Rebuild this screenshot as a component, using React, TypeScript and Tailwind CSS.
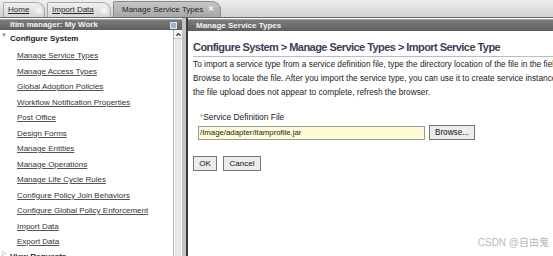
import { ChevronUp } from 'lucide-react'

const NAV_ITEMS = [
  'Manage Service Types',
  'Manage Access Types',
  'Global Adoption Policies',
  'Workflow Notification Properties',
  'Post Office',
  'Design Forms',
  'Manage Entities',
  'Manage Operations',
  'Manage Life Cycle Rules',
  'Configure Policy Join Behaviors',
  'Configure Global Policy Enforcement',
  'Import Data',
  'Export Data',
]

function Tab({ label, width, active }: { label: string, width: string, active?: boolean }) {
  if (active) {
    return (
      <div className={`${width} flex h-[16px] items-center gap-[5px] rounded-tr-[9px] rounded-tl-[2px] border border-b-0 border-[#8a8a8a] bg-gradient-to-b from-[#c6c6c6] to-[#a6a6a6] pl-[8px] text-[8px] text-[#1e1e1e]`}>
        <span>{label}</span>
        <span className="text-[7px] font-bold text-white">✕</span>
      </div>
    )
  }
  return (
    <div className={`${width} flex h-[15px] items-center gap-[6px] rounded-tr-[9px] rounded-tl-[2px] border border-b-0 border-[#a8a8a8] bg-gradient-to-b from-[#f0f0f0] to-[#d6d6d6] pl-[4px] text-[8px] text-[#2a2a2a]`}>
      <span className="underline">{label}</span>
      <span className="h-[7px] w-[7px] rounded-[1px] bg-[#ebebeb] text-center text-[6px] leading-[7px] text-white">✕</span>
    </div>
  )
}

export default function App() {
  return (
    <div className="flex h-[256px] w-[553px] flex-col overflow-hidden bg-white font-['Liberation_Sans',Arial,sans-serif]">
      <div className="flex h-[18px] shrink-0 items-end gap-[2px] border-b border-[#6a6a6a] bg-gradient-to-b from-[#eeeeee] to-[#d2d2d2] pl-[3px]">
        <Tab label="Home" width="w-[42px]" />
        <Tab label="Import Data" width="w-[64px]" />
        <Tab label="Manage Service Types" width="w-[108px]" active />
      </div>

      <div className="flex min-h-0 flex-1">
        <aside className="flex w-[182px] shrink-0 flex-col">
          <div className="mt-[1px] flex h-[11px] items-center justify-between border-t border-[#a4a4a4] bg-gradient-to-b from-[#7c7c7c] to-[#5f5f5f] pl-[10px] pr-[5px]">
            <span className="text-[8px] font-bold text-[#f2f2f2]">Itim manager: My Work</span>
            <span className="h-[7px] w-[7px] border border-[#dde6f0] bg-[#9fb3c8]" />
          </div>
          <div className="flex min-h-0 flex-1">
            <div className="relative flex-1 overflow-hidden pl-[17px] pt-[4px]">
              <span className="absolute left-[1px] top-[1px] text-[6px] text-[#8c8c99]">▼</span>
              <div className="-ml-[7px] mb-[6px] text-[8px] font-bold leading-[10px] text-[#222]">Configure System</div>
              <ul className="flex flex-col">
                {NAV_ITEMS.map((item) => (
                  <li key={item} className="h-[15.5px] text-[8px] leading-[12px] text-[#333] underline decoration-[#555]">
                    {item}
                  </li>
                ))}
              </ul>
              <div className="relative -ml-[7px] text-[8px] font-bold leading-[10px] text-[#222]">
                <span className="absolute -left-[8px] -top-[4px] text-[6px] font-normal text-[#8c8c99]">▷</span>
                View Requests
              </div>
            </div>
            <div className="flex w-[9px] flex-col border-l border-[#b4b4b4] bg-[#e7e7e7]">
              <div className="flex h-[9px] items-center justify-center border-b border-[#c4c4c4] bg-[#f4f4f4]">
                <ChevronUp size={7} strokeWidth={4} className="text-[#222]" />
              </div>
              <div className="flex-1 border-x border-[#f6f6f6]" />
            </div>
          </div>
        </aside>

        <div className="w-[6px] shrink-0 border-r-2 border-[#3c3c3c] bg-[#c4c4c4]" />

        <main className="flex min-w-0 flex-1 flex-col overflow-hidden">
          <div className="mt-[1px] flex h-[12px] items-center border-t border-[#a4a4a4] bg-gradient-to-b from-[#7c7c7c] to-[#5f5f5f] pl-[8px]">
            <span className="text-[8px] font-bold text-[#f2f2f2]">Manage Service Types</span>
          </div>
          <div className="relative flex-1 pl-[5px] pt-[9px]">
            <h1 className="whitespace-nowrap border-b border-[#b8bcc8] pb-[2px] text-[11px] font-bold leading-[14px] tracking-[-0.55px] text-[#3b4058]">
              Configure System &gt; Manage Service Types &gt; Import Service Type
            </h1>
            <p className="whitespace-nowrap text-[8.3px] leading-[14px] text-[#222]">
              To import a service type from a service definition file, type the directory location of the file in the field, or click
              <br />
              Browse to locate the file. After you import the service type, you can use it to create service instances. If
              <br />
              the file upload does not appear to complete, refresh the browser.
            </p>
            <div className="mt-[12px] pl-[5px]">
              <div className="pl-[2px] text-[8.4px] leading-[12px] text-[#222]">
                <span className="text-[#c89a2a]">*</span>Service Definition File
              </div>
              <div className="mt-[2px] flex items-center gap-[4px]">
                <div className="flex h-[14px] w-[227px] items-center border border-[#9a9a9a] bg-[#fffbd6] pl-[1px] text-[7.8px] text-[#222]">
                  /Image/adapter/itamprofile.jar
                </div>
                <button type="button" className="h-[15px] w-[46px] border border-[#777] bg-[#ececec] text-[8.2px] leading-[13px] text-[#111]">
                  Browse...
                </button>
              </div>
            </div>
            <div className="mt-[16px] flex gap-[6px]">
              <button type="button" className="h-[15px] w-[24px] border border-[#777] bg-[#ececec] text-[8px] text-[#111]">OK</button>
              <button type="button" className="h-[15px] w-[38px] border border-[#777] bg-[#ececec] text-[8px] text-[#111]">Cancel</button>
            </div>
            <span className="absolute bottom-[6px] right-[4px] font-['Liberation_Sans','Noto_Sans_CJK_SC',sans-serif] text-[10px] text-[#b8b8b8]">
              CSDN @自由鬼
            </span>
          </div>
        </main>
      </div>
    </div>
  )
}
